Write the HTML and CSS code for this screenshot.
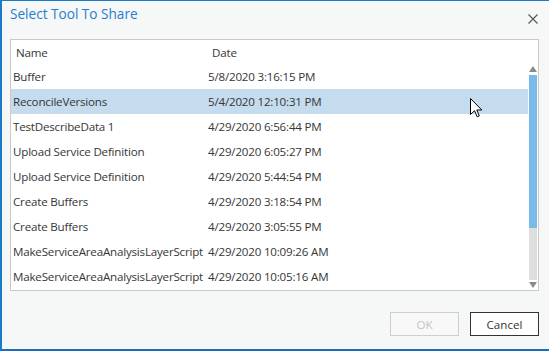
FILE: index.html
```html
<!DOCTYPE html>
<html>
<head>
<meta charset="utf-8">
<link rel="stylesheet" href="styles.css">
</head>
<body>
<div class="dialog">
  <div class="titlebar">
    <span class="title">Select Tool To Share</span>
    <svg class="close" width="10" height="10" viewBox="0 0 10 10"><path d="M0.5 0.5 L9.5 9.5 M9.5 0.5 L0.5 9.5" stroke="#5a5a5a" stroke-width="1.2" fill="none"/></svg>
  </div>
  <div class="listbox">
    <div class="header">
      <span class="hname">Name</span>
      <span class="hdate">Date</span>
    </div>
    <div class="body">
      <div class="rows">
        <div class="row"><span class="name">Buffer</span><span class="date">5/8/2020 3:16:15 PM</span></div>
        <div class="row selected"><span class="name">ReconcileVersions</span><span class="date">5/4/2020 12:10:31 PM</span></div>
        <div class="row"><span class="name">TestDescribeData 1</span><span class="date">4/29/2020 6:56:44 PM</span></div>
        <div class="row"><span class="name">Upload Service Definition</span><span class="date">4/29/2020 6:05:27 PM</span></div>
        <div class="row"><span class="name">Upload Service Definition</span><span class="date">4/29/2020 5:44:54 PM</span></div>
        <div class="row"><span class="name">Create Buffers</span><span class="date">4/29/2020 3:18:54 PM</span></div>
        <div class="row"><span class="name">Create Buffers</span><span class="date">4/29/2020 3:05:55 PM</span></div>
        <div class="row"><span class="name">MakeServiceAreaAnalysisLayerScript</span><span class="date">4/29/2020 10:09:26 AM</span></div>
        <div class="row"><span class="name">MakeServiceAreaAnalysisLayerScript</span><span class="date">4/29/2020 10:05:16 AM</span></div>
      </div>
      <div class="scrollbar">
        <div class="arrow up"></div>
        <div class="thumb"></div>
        <div class="track"></div>
        <div class="arrow down"></div>
      </div>
    </div>
  </div>
  <div class="buttons">
    <div class="btn disabled">OK</div>
    <div class="btn default">Cancel</div>
  </div>
  <svg class="cursor" width="13" height="20" viewBox="0 0 13 20"><path d="M0.5 0.5 L0.5 16.5 L4.5 12.7 L7.2 18.8 L9.3 17.9 L6.8 12 L11.8 12 Z" fill="#fff" stroke="#000" stroke-width="1" stroke-linejoin="miter"/></svg>
</div>
</body>
</html>
```
FILE: styles.css
```css
html, body {
  margin: 0;
  padding: 0;
}
body {
  width: 549px;
  height: 351px;
  overflow: hidden;
  background: #f7f7f7;
  font-family: "Open Sans", "Noto Sans", sans-serif;
}
.dialog {
  position: relative;
  box-sizing: border-box;
  width: 549px;
  height: 351px;
  background: #f6f7f7;
  border-top: 1px solid #1b7bcb;
  border-left: 2px solid #1b7bcb;
  border-bottom: 2px solid #1b6fb6;
  display: flex;
  flex-direction: column;
}
.titlebar {
  height: 38px;
  display: flex;
  align-items: flex-start;
  justify-content: space-between;
  padding: 2px 11px 0 8px;
  box-sizing: border-box;
}
.title {
  font-size: 13.6px;
  color: #1f80cf;
  line-height: 22px;
}
.close {
  margin-top: 11px;
}
.listbox {
  margin-left: 8px;
  width: 529px;
  height: 252px;
  box-sizing: border-box;
  border: 1px solid #c9c9c9;
  background: #fff;
  display: flex;
  flex-direction: column;
  font-size: 11.6px;
  letter-spacing: -0.2px;
  color: #363636;
}
.header {
  height: 24px;
  display: flex;
  align-items: center;
}
.hname {
  margin-left: 5px;
  width: 196px;
}
.body {
  display: flex;
  height: 225px;
}
.rows {
  width: 517px;
}
.row {
  height: 25px;
  display: flex;
  align-items: center;
  white-space: nowrap;
}
.row.selected {
  background: #c5dcee;
}
.name {
  margin-left: 2px;
  width: 195px;
}
.scrollbar {
  width: 8px;
  margin-left: 1px;
  display: flex;
  flex-direction: column;
  align-items: center;
}
.arrow {
  width: 0;
  height: 0;
  border-left: 4px solid transparent;
  border-right: 4px solid transparent;
}
.arrow.up {
  margin-top: 2px;
  margin-bottom: 3px;
  border-bottom: 6px solid #8a8a8a;
}
.arrow.down {
  margin-top: 2px;
  border-top: 6px solid #8a8a8a;
}
.thumb {
  width: 8px;
  height: 153px;
  background: #78bbe9;
}
.track {
  width: 8px;
  height: 52px;
  background: #dedede;
}
.buttons {
  display: flex;
  justify-content: flex-end;
  gap: 11px;
  width: 537px;
  margin-top: 21px;
}
.btn {
  box-sizing: border-box;
  width: 69px;
  height: 24px;
  display: flex;
  align-items: center;
  justify-content: center;
  font-size: 11.6px;
  background: #fff;
}
.btn.disabled {
  border: 1px solid #cfcfcf;
  color: #c4c4c4;
  background: #f8f8f8;
}
.btn.default {
  border: 1px solid #333;
  color: #333;
}
.cursor {
  position: absolute;
  left: 468px;
  top: 97px;
}
```
